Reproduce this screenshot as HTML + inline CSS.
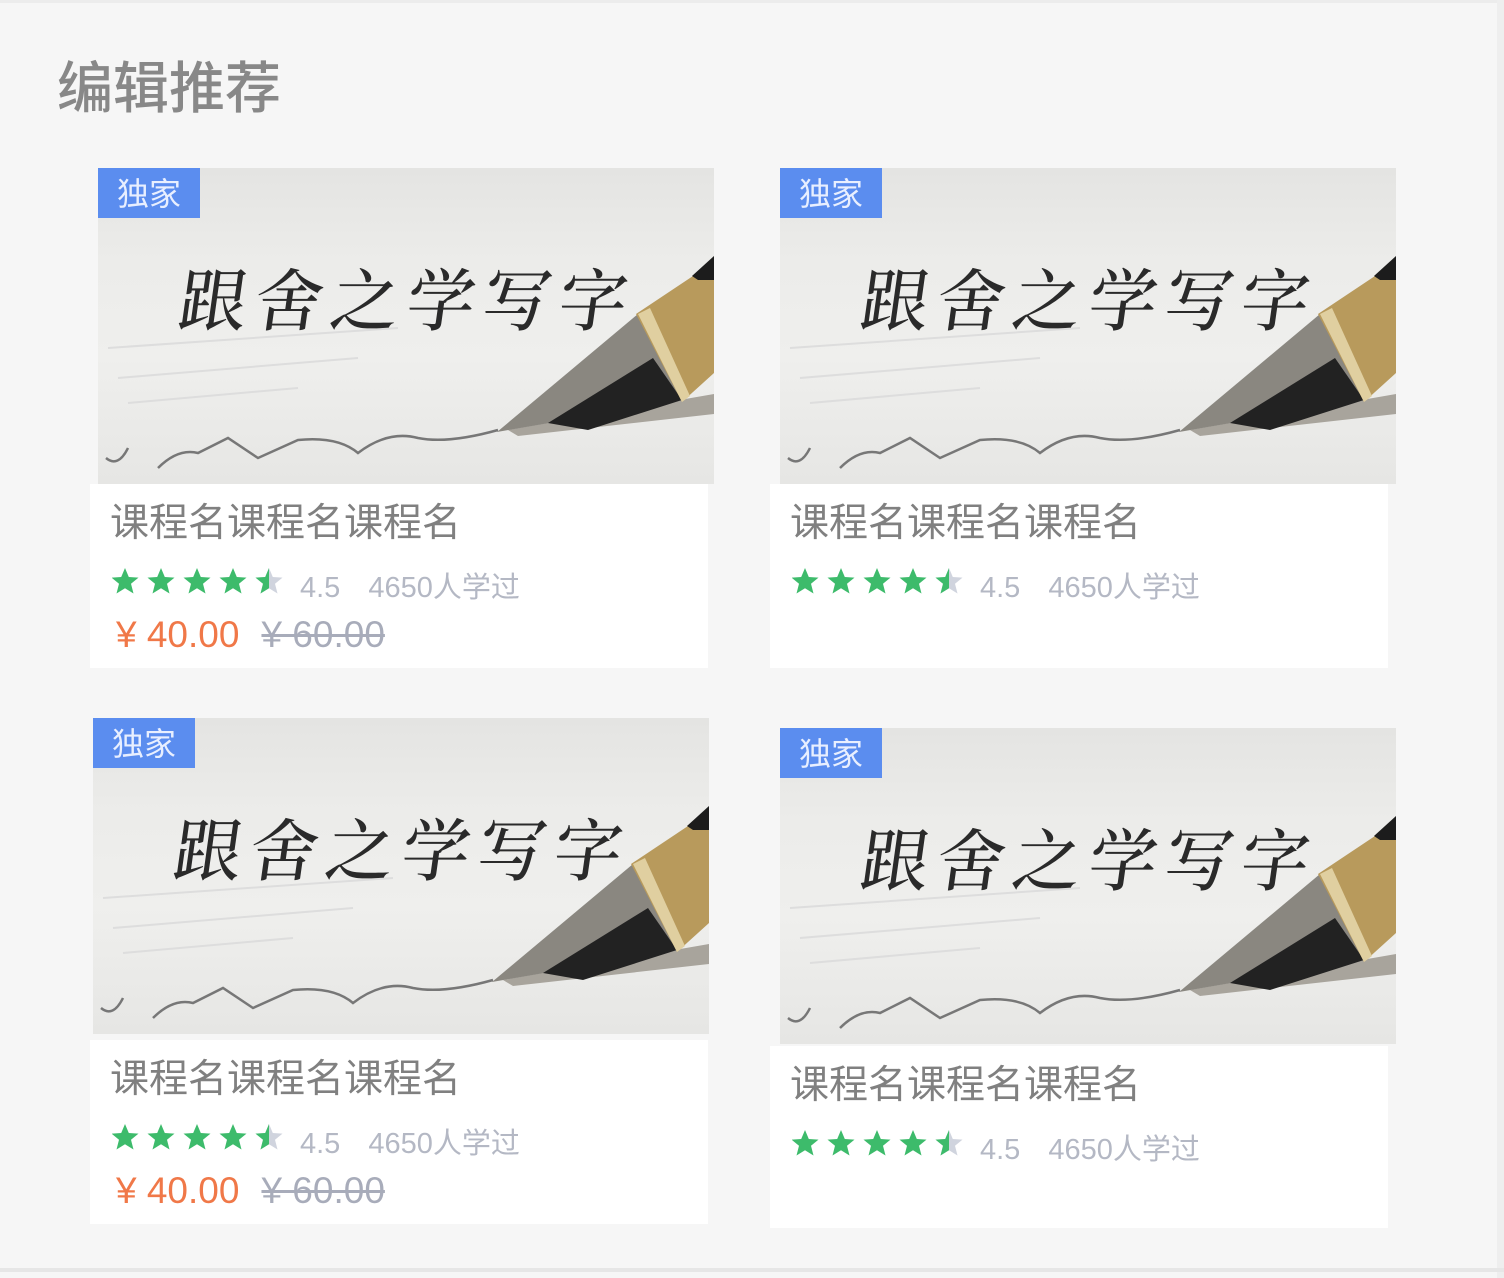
<!DOCTYPE html>
<html><head><meta charset="utf-8"><style>
html,body{margin:0;padding:0}
body{width:1504px;height:1278px;background:#f6f6f6;position:relative;overflow:hidden;font-family:"Liberation Sans","Noto Sans CJK SC",sans-serif}
.topline{position:absolute;left:0;top:0;width:1504px;height:3px;background:#ececec}
.rline{position:absolute;left:1497px;top:0;width:7px;height:1278px;background:#eeeeee}
.bline{position:absolute;left:0;top:1268px;width:1504px;height:4px;background:#e6e6e6}
h1{position:absolute;left:57px;top:44px;margin:0;font-size:56px;font-weight:500;color:#888;font-family:"Noto Sans CJK SC",sans-serif}
.img{position:absolute;width:616px;height:316px;overflow:hidden;background:linear-gradient(180deg,#e4e4e2 0%,#ececea 30%,#efefed 60%,#e6e6e4 100%)}
.cal{position:absolute;left:82px;top:80px;font-family:"Noto Serif CJK SC",serif;font-size:68px;font-weight:500;color:#2a2a2a;letter-spacing:8px;transform:skewX(-8deg);white-space:nowrap}
.badge{position:absolute;left:0;top:0;width:102px;height:50px;background:#5b8def;color:#e8efff;font-size:32px;line-height:48px;text-align:center;font-family:"Noto Sans CJK SC",sans-serif}
.img svg{position:absolute;left:0;top:0}
.box{position:absolute;background:#fff;width:618px;height:184px}
.t{position:absolute;left:20px;top:8px;font-size:39px;color:#808080;font-family:"Noto Sans CJK SC",sans-serif}
.stars{position:absolute;left:22px;top:84px;height:30px;white-space:nowrap}
.stars svg{vertical-align:top}
.rt{position:absolute;left:210px;top:80px;font-size:29px;color:#b4b8c4;white-space:nowrap}
.rt span{margin-left:28px}
.pr{position:absolute;left:26px;top:130px;font-size:37px;color:#f07848;white-space:nowrap}
.op{color:#a8acba;text-decoration:line-through;margin-left:22px}
</style></head><body>
<div class="topline"></div><div class="rline"></div><div class="bline"></div>
<h1>编辑推荐</h1>

<div class="img" style="left:98px;top:168px">
<div class="cal">跟舍之学写字</div>
<svg width="616" height="316"><path d="M8 290 Q20 300 30 280 M60 300 Q80 280 100 285 L130 270 L160 290 L200 272 Q240 268 260 285 Q290 262 320 270 Q350 276 400 262" stroke="#777" stroke-width="2.5" fill="none"/><path d="M10 180 L300 160 M20 210 L260 190 M30 235 L200 220" stroke="#ddd" stroke-width="2"/><polygon points="410,262 616,226 616,246 420,268" fill="#a8a49c"/><polygon points="399,264 540,146 584,232" fill="#8a8780"/><polygon points="450,255 555,190 584,232 490,262" fill="#222"/><polygon points="538,146 598,106 616,106 616,205 584,234" fill="#b89a5c"/><polygon points="594,108 616,88 616,112 600,112" fill="#1c1c1c"/><polygon points="540,146 552,140 592,228 584,234" fill="#e0cfa0"/></svg>
<div class="badge">独家</div></div>
<div class="box" style="left:90px;top:484px"><div class="t">课程名课程名课程名</div>
<div class="stars"><svg width="180" height="28" viewBox="0 0 180 28"><g fill="#3dbb6b"><path id="s" d="M13 0 L16.8 9 L26.5 9.6 L19 15.8 L21.5 25.5 L13 20.3 L4.5 25.5 L7 15.8 L-0.5 9.6 L9.2 9Z"/><use href="#s" x="36"/><use href="#s" x="72"/><use href="#s" x="108"/></g><use href="#s" x="144" fill="#d0d4de"/><path d="M157 0 L157 20.3 L148.5 25.5 L151 15.8 L143.5 9.6 L153.2 9Z" fill="#3dbb6b"/></svg></div>
<div class="rt">4.5<span>4650人学过</span></div>
<div class="pr">¥ 40.00<span class="op">¥ 60.00</span></div></div>

<div class="img" style="left:780px;top:168px">
<div class="cal">跟舍之学写字</div>
<svg width="616" height="316"><path d="M8 290 Q20 300 30 280 M60 300 Q80 280 100 285 L130 270 L160 290 L200 272 Q240 268 260 285 Q290 262 320 270 Q350 276 400 262" stroke="#777" stroke-width="2.5" fill="none"/><path d="M10 180 L300 160 M20 210 L260 190 M30 235 L200 220" stroke="#ddd" stroke-width="2"/><polygon points="410,262 616,226 616,246 420,268" fill="#a8a49c"/><polygon points="399,264 540,146 584,232" fill="#8a8780"/><polygon points="450,255 555,190 584,232 490,262" fill="#222"/><polygon points="538,146 598,106 616,106 616,205 584,234" fill="#b89a5c"/><polygon points="594,108 616,88 616,112 600,112" fill="#1c1c1c"/><polygon points="540,146 552,140 592,228 584,234" fill="#e0cfa0"/></svg>
<div class="badge">独家</div></div>
<div class="box" style="left:770px;top:484px"><div class="t">课程名课程名课程名</div>
<div class="stars"><svg width="180" height="28" viewBox="0 0 180 28"><g fill="#3dbb6b"><use href="#s"/><use href="#s" x="36"/><use href="#s" x="72"/><use href="#s" x="108"/></g><use href="#s" x="144" fill="#d0d4de"/><path d="M157 0 L157 20.3 L148.5 25.5 L151 15.8 L143.5 9.6 L153.2 9Z" fill="#3dbb6b"/></svg></div>
<div class="rt">4.5<span>4650人学过</span></div></div>

<div class="img" style="left:93px;top:718px">
<div class="cal">跟舍之学写字</div>
<svg width="616" height="316"><path d="M8 290 Q20 300 30 280 M60 300 Q80 280 100 285 L130 270 L160 290 L200 272 Q240 268 260 285 Q290 262 320 270 Q350 276 400 262" stroke="#777" stroke-width="2.5" fill="none"/><path d="M10 180 L300 160 M20 210 L260 190 M30 235 L200 220" stroke="#ddd" stroke-width="2"/><polygon points="410,262 616,226 616,246 420,268" fill="#a8a49c"/><polygon points="399,264 540,146 584,232" fill="#8a8780"/><polygon points="450,255 555,190 584,232 490,262" fill="#222"/><polygon points="538,146 598,106 616,106 616,205 584,234" fill="#b89a5c"/><polygon points="594,108 616,88 616,112 600,112" fill="#1c1c1c"/><polygon points="540,146 552,140 592,228 584,234" fill="#e0cfa0"/></svg>
<div class="badge">独家</div></div>
<div class="box" style="left:90px;top:1040px"><div class="t">课程名课程名课程名</div>
<div class="stars"><svg width="180" height="28" viewBox="0 0 180 28"><g fill="#3dbb6b"><use href="#s"/><use href="#s" x="36"/><use href="#s" x="72"/><use href="#s" x="108"/></g><use href="#s" x="144" fill="#d0d4de"/><path d="M157 0 L157 20.3 L148.5 25.5 L151 15.8 L143.5 9.6 L153.2 9Z" fill="#3dbb6b"/></svg></div>
<div class="rt">4.5<span>4650人学过</span></div>
<div class="pr">¥ 40.00<span class="op">¥ 60.00</span></div></div>

<div class="img" style="left:780px;top:728px">
<div class="cal">跟舍之学写字</div>
<svg width="616" height="316"><path d="M8 290 Q20 300 30 280 M60 300 Q80 280 100 285 L130 270 L160 290 L200 272 Q240 268 260 285 Q290 262 320 270 Q350 276 400 262" stroke="#777" stroke-width="2.5" fill="none"/><path d="M10 180 L300 160 M20 210 L260 190 M30 235 L200 220" stroke="#ddd" stroke-width="2"/><polygon points="410,262 616,226 616,246 420,268" fill="#a8a49c"/><polygon points="399,264 540,146 584,232" fill="#8a8780"/><polygon points="450,255 555,190 584,232 490,262" fill="#222"/><polygon points="538,146 598,106 616,106 616,205 584,234" fill="#b89a5c"/><polygon points="594,108 616,88 616,112 600,112" fill="#1c1c1c"/><polygon points="540,146 552,140 592,228 584,234" fill="#e0cfa0"/></svg>
<div class="badge">独家</div></div>
<div class="box" style="left:770px;top:1046px;height:182px"><div class="t">课程名课程名课程名</div>
<div class="stars"><svg width="180" height="28" viewBox="0 0 180 28"><g fill="#3dbb6b"><use href="#s"/><use href="#s" x="36"/><use href="#s" x="72"/><use href="#s" x="108"/></g><use href="#s" x="144" fill="#d0d4de"/><path d="M157 0 L157 20.3 L148.5 25.5 L151 15.8 L143.5 9.6 L153.2 9Z" fill="#3dbb6b"/></svg></div>
<div class="rt">4.5<span>4650人学过</span></div></div>
</body></html>
